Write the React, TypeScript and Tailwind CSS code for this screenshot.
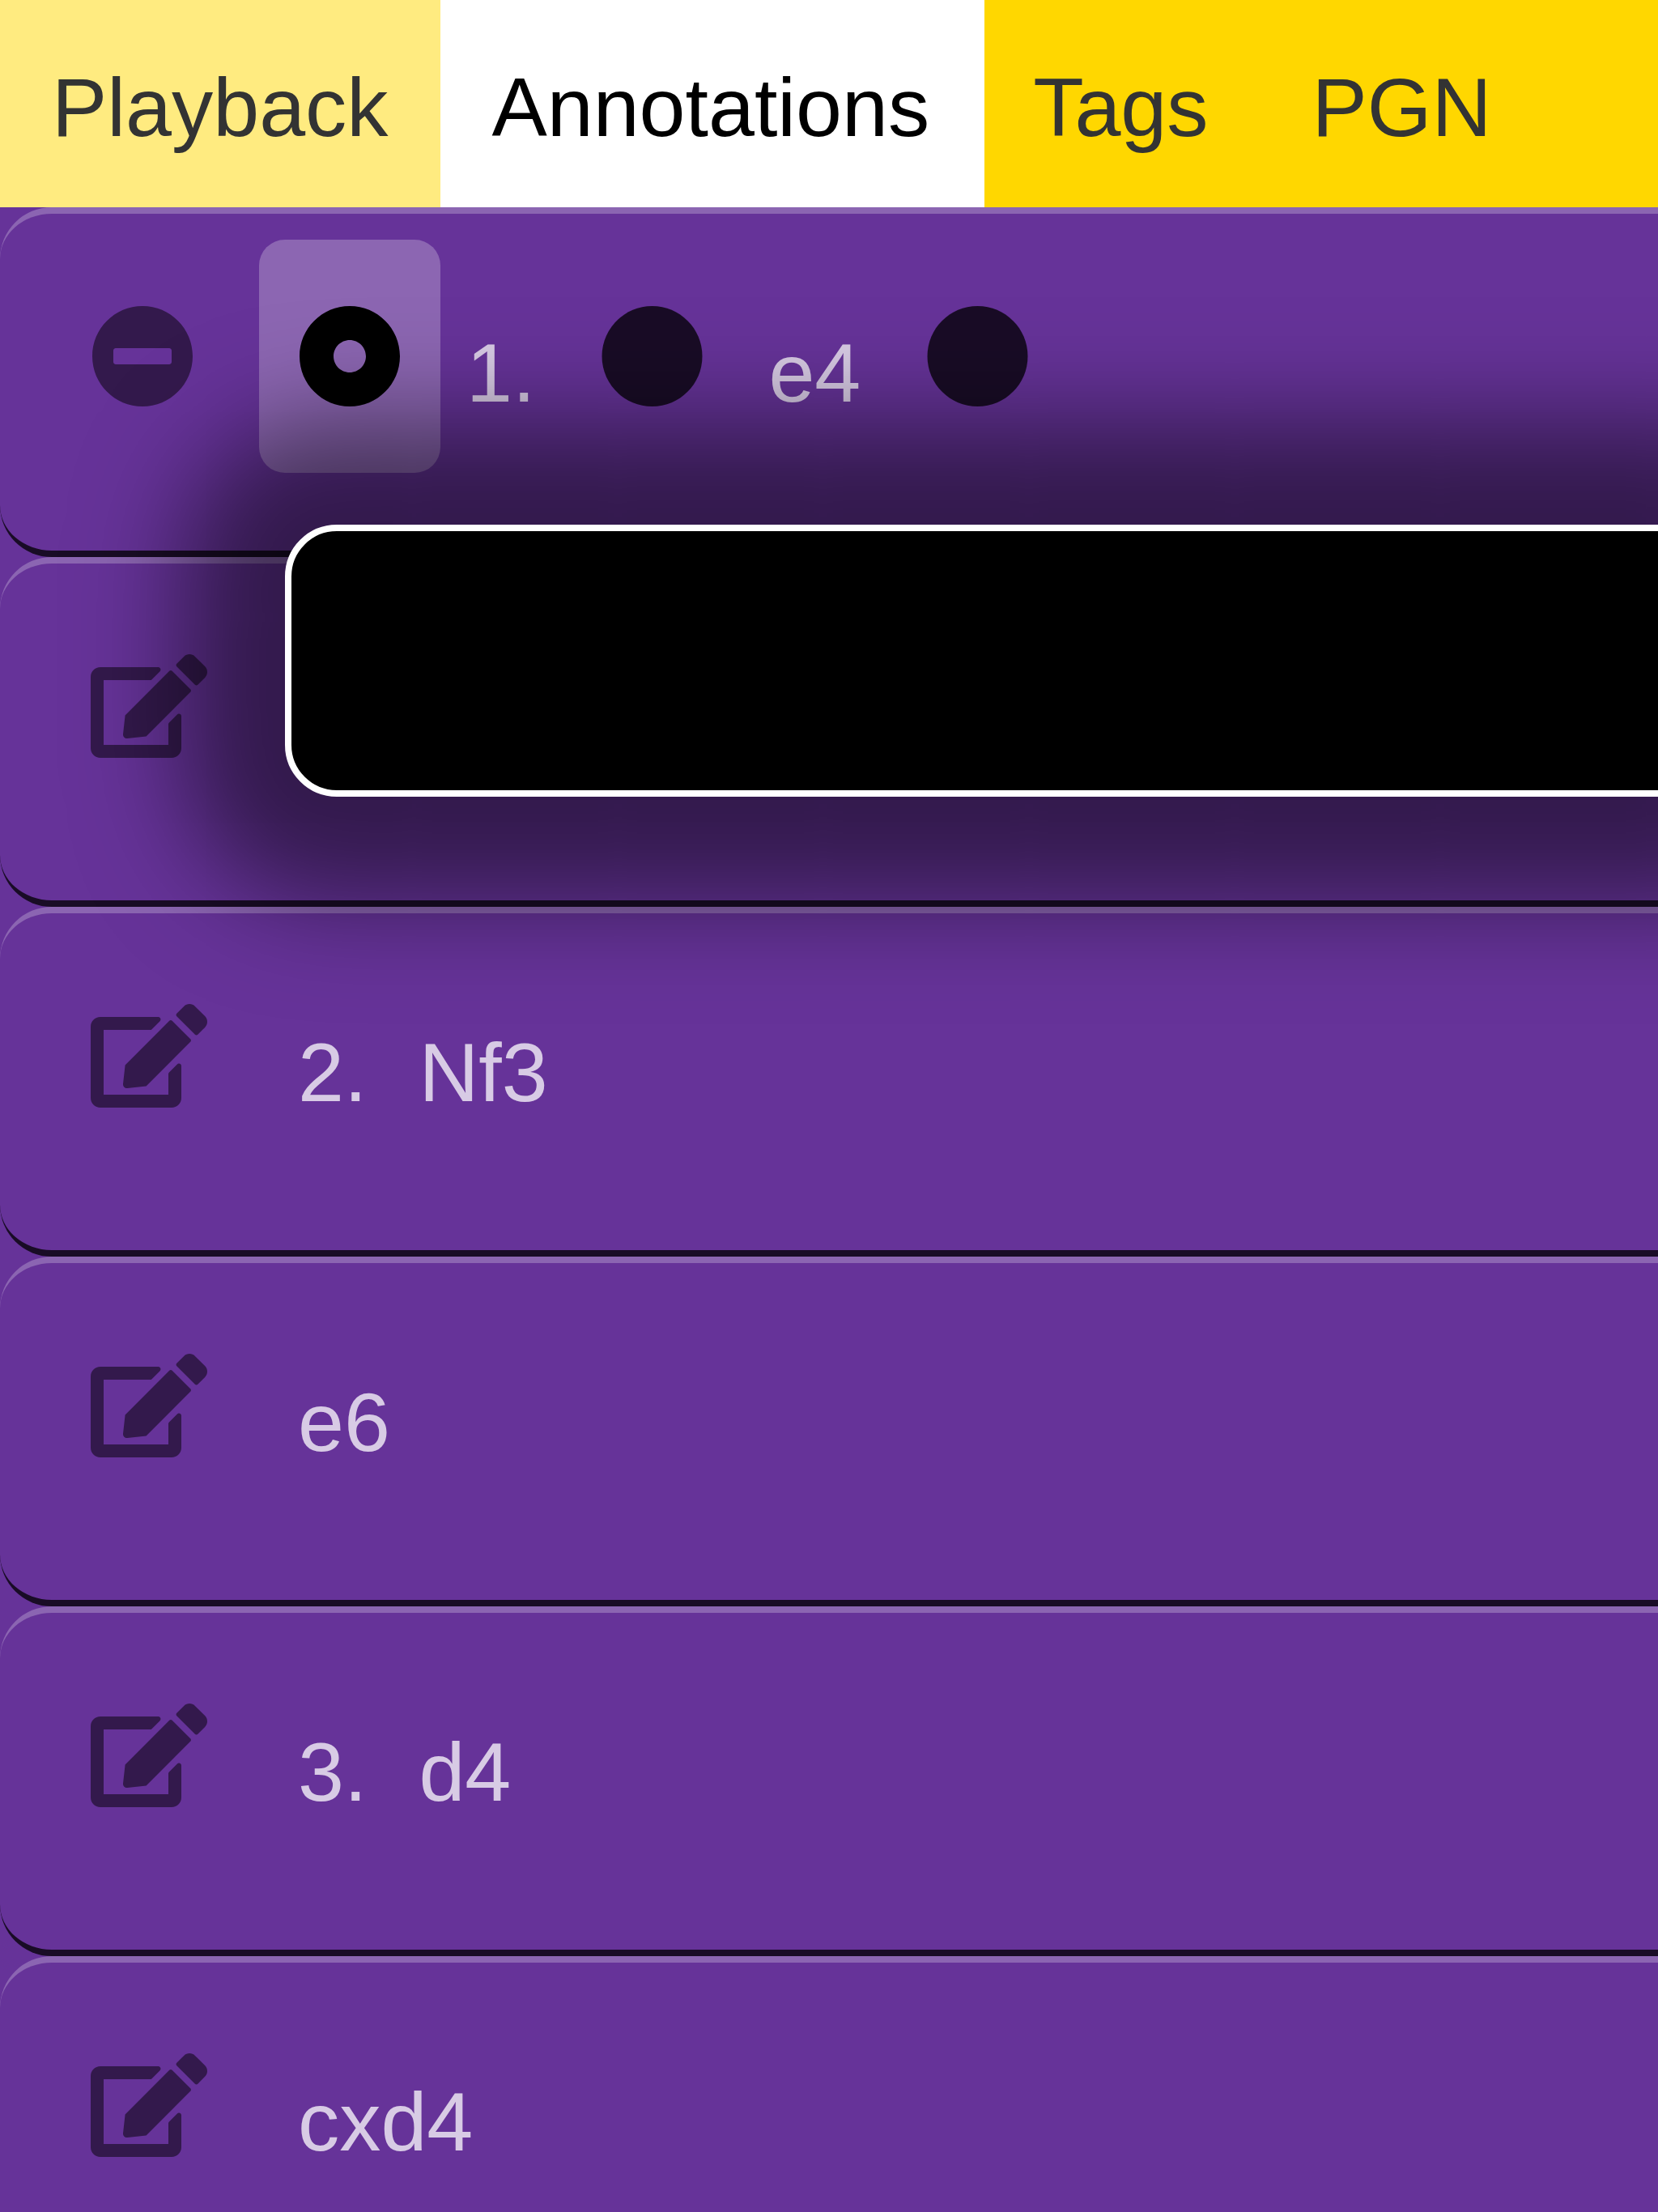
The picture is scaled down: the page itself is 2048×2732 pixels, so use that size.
import type { ReactNode } from "react";
import { FaCircle, FaDotCircle, FaEdit, FaMinusCircle } from "react-icons/fa";

function Tab({ children, className }: { children: ReactNode; className: string }) {
  return (
    <button className={`h-[256px] text-left leading-[265px] whitespace-nowrap ${className}`}>
      {children}
    </button>
  );
}

function Row({ children }: { children: ReactNode }) {
  return (
    <li className="flex h-[432px] items-start gap-[32px] rounded-[64px] rounded-r-none border-t-[8px] border-b-[8px] border-t-white/25 border-b-black/75 pt-[32px] pl-[64px] leading-[330px] text-white/75">
      {children}
    </li>
  );
}

function IconButton({ children, className }: { children: ReactNode; className: string }) {
  return (
    <button className={`flex h-[288px] shrink-0 items-center rounded-[32px] px-[48px] ${className}`}>
      {children}
    </button>
  );
}

const moves = [
  { number: "2.", move: "Nf3" },
  { number: "", move: "e6" },
  { number: "3.", move: "d4" },
  { number: "", move: "cxd4" },
];

export default function App() {
  return (
    <div className="relative h-[2732px] w-[2048px] overflow-hidden bg-[#663399] font-['Liberation_Sans',sans-serif] text-[102.4px]">
      <nav className="flex h-[256px] bg-[#ffd700] text-[#333333]">
        <Tab className="w-[544px] bg-white/50 pl-[64px]">Playback</Tab>
        <Tab className="w-[672px] bg-white pl-[63.4px] text-black">Annotations</Tab>
        <Tab className="pr-[64px] pl-[60.2px]">Tags</Tab>
        <Tab className="px-[64px]">PGN</Tab>
      </nav>
      <ul>
        <Row>
          <IconButton className="text-black/50">
            <FaMinusCircle className="size-[128px]" />
          </IconButton>
          <IconButton className="bg-white/25 text-black">
            <FaDotCircle className="size-[128px]" />
          </IconButton>
          <span>1.</span>
          <IconButton className="text-black/75">
            <FaCircle className="size-[128px] translate-x-[0.5px]" />
          </IconButton>
          <span>e4</span>
          <IconButton className="text-black/75">
            <FaCircle className="size-[128px] translate-x-[0.5px]" />
          </IconButton>
        </Row>
        <Row>
          <IconButton className="text-black/50">
            <FaEdit className="h-[128px] w-[144px]" />
          </IconButton>
        </Row>
        {moves.map((m) => (
          <Row key={m.move}>
            <IconButton className="text-black/50">
              <FaEdit className="h-[128px] w-[144px]" />
            </IconButton>
            <span className="ml-[32px] flex gap-[64px]">
              {m.number && <span>{m.number}</span>}
              <span>{m.move}</span>
            </span>
          </Row>
        ))}
      </ul>
      <div className="absolute top-[648px] left-[352px] h-[336px] w-[2400px] rounded-[64px] border-[8px] border-white bg-black shadow-[0_0_128px_128px_rgba(0,0,0,0.5)]" />
    </div>
  );
}
